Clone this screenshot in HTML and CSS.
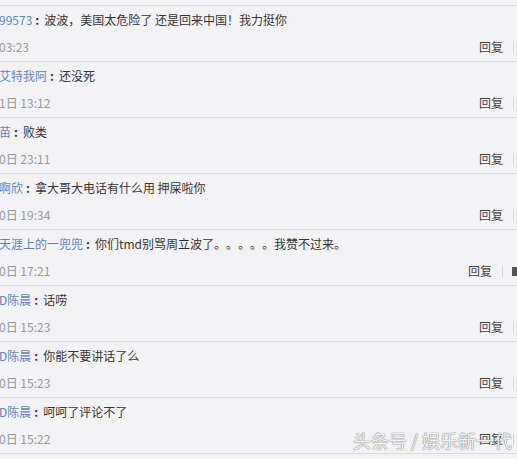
FILE: index.html
```html
<!DOCTYPE html>
<html lang="zh-CN">
<head>
<meta charset="utf-8">
<title>评论</title>
<link rel="stylesheet" href="styles.css">
</head>
<body>
<div class="page">
  <div class="list">
    <div class="row row-top"></div>

    <div class="row">
      <div class="main">
        <p class="line"><span class="user">99573</span><span class="colon">:</span><span class="text">波波，美国太危险了 还是回来中国！我力挺你</span></p>
        <p class="time">03:23</p>
      </div>
      <div class="actions"><span class="reply">回复</span><span class="bar"></span><span class="like"><span class="like-icon"></span></span></div>
    </div>

    <div class="row">
      <div class="main">
        <p class="line"><span class="user">艾特我阿</span><span class="colon">:</span><span class="text">还没死</span></p>
        <p class="time">1日 13:12</p>
      </div>
      <div class="actions"><span class="reply">回复</span><span class="bar"></span><span class="like"><span class="like-icon"></span></span></div>
    </div>

    <div class="row">
      <div class="main">
        <p class="line"><span class="user">苗</span><span class="colon">:</span><span class="text">败类</span></p>
        <p class="time">0日 23:11</p>
      </div>
      <div class="actions"><span class="reply">回复</span><span class="bar"></span><span class="like"><span class="like-icon"></span></span></div>
    </div>

    <div class="row">
      <div class="main">
        <p class="line"><span class="user">啊欣</span><span class="colon">:</span><span class="text">拿大哥大电话有什么用 押屎啦你</span></p>
        <p class="time">0日 19:34</p>
      </div>
      <div class="actions"><span class="reply">回复</span><span class="bar"></span><span class="like"><span class="like-icon"></span></span></div>
    </div>

    <div class="row">
      <div class="main">
        <p class="line"><span class="user">天涯上的一兜兜</span><span class="colon">:</span><span class="text">你们tmd别骂周立波了。。。。。我赞不过来。</span></p>
        <p class="time">0日 17:21</p>
      </div>
      <div class="actions"><span class="reply">回复</span><span class="bar"></span><span class="like"><span class="like-icon"></span><span class="count"></span></span></div>
    </div>

    <div class="row">
      <div class="main">
        <p class="line"><span class="user">D陈晨</span><span class="colon">:</span><span class="text">话唠</span></p>
        <p class="time">0日 15:23</p>
      </div>
      <div class="actions"><span class="reply">回复</span><span class="bar"></span><span class="like"><span class="like-icon"></span></span></div>
    </div>

    <div class="row">
      <div class="main">
        <p class="line"><span class="user">D陈晨</span><span class="colon">:</span><span class="text">你能不要讲话了么</span></p>
        <p class="time">0日 15:23</p>
      </div>
      <div class="actions"><span class="reply">回复</span><span class="bar"></span><span class="like"><span class="like-icon"></span></span></div>
    </div>

    <div class="row">
      <div class="main">
        <p class="line"><span class="user">D陈晨</span><span class="colon">:</span><span class="text">呵呵了评论不了</span></p>
        <p class="time">0日 15:22</p>
      </div>
      <div class="actions"><span class="reply">回复</span><span class="bar"></span><span class="like"><span class="like-icon"></span></span></div>
    </div>

    <div class="row row-bottom"></div>
  </div>
  <div class="watermark">头条号 / 娱乐新一代</div>
</div>
</body>
</html>
```
FILE: styles.css
```css
html, body {
  margin: 0;
  padding: 0;
  background: #f3f3f5;
  overflow: hidden;
}

.page {
  position: relative;
  width: 517px;
  height: 459px;
  overflow: hidden;
  font-family: "Microsoft YaHei", "Noto Sans CJK SC", "Liberation Sans", sans-serif;
  font-size: 12px;
  color: #333;
  text-spacing-trim: space-all;
}

.list {
  width: 537px;
}

.row {
  display: flex;
  align-items: flex-end;
  height: 55px;
  border-bottom: 1px solid #dcdcde;
  box-sizing: content-box;
}

.row-top {
  height: 5px;
}

.row-bottom {
  height: 10px;
  border-bottom: none;
}

.main {
  flex: 1;
  min-width: 0;
  padding-top: 4px;
  align-self: flex-start;
  margin-left: -1px;
}

.line,
.time {
  margin: 0;
  height: 20px;
  line-height: 20px;
  white-space: nowrap;
}

.time {
  margin-top: 7px;
  color: #999;
}

.user {
  color: #5d86bd;
}

.colon {
  color: #333;
  font-weight: bold;
  margin: 0 5px 0 3px;
}

.text {
  color: #333;
}

.actions {
  display: flex;
  align-items: center;
  height: 20px;
  margin-bottom: 4px;
}

.reply {
  color: #444;
  line-height: 20px;
}

.bar {
  width: 1px;
  height: 12px;
  background: #d6d6d8;
  margin: 0 9px 0 10px;
}

.like {
  display: flex;
  align-items: center;
}

.like-icon {
  width: 8px;
  height: 9px;
  background: #555;
  margin-right: 6px;
}

.count {
  display: block;
  width: 11px;
  height: 9px;
}

.watermark {
  position: absolute;
  left: 353px;
  top: 428px;
  font-size: 18px;
  line-height: 24px;
  white-space: nowrap;
  color: rgba(255, 255, 255, 0.92);
  text-shadow: 0 0 1px #7a7a7a, 0 0 1px #7a7a7a;
}
```
